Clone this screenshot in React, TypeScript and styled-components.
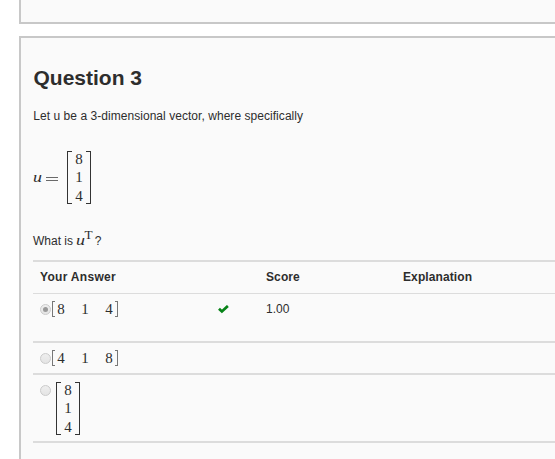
import React from "react";
import styled, { createGlobalStyle } from "styled-components";

const GlobalStyle = createGlobalStyle`
  * { box-sizing: border-box; }
  body {
    margin: 0;
    background: #fff;
    color: #2d2d2d;
    font-family: "Liberation Sans", Arial, sans-serif;
    font-size: 12px;
    overflow: hidden;
  }
`;

const Page = styled.main`
  height: 459px;
  padding-left: 19px;
  overflow: hidden;
`;

const PreviousQuestion = styled.section`
  height: 24px;
  margin-bottom: 12px;
  background: #fafafa;
  border-left: 2px solid #c8c8c8;
  border-bottom: 2px solid #c8c8c8;
`;

const QuestionPanel = styled.section`
  height: 440px;
  padding: 28px 0 0 12px;
  background: #fafafa;
  border-left: 2px solid #c8c8c8;
  border-top: 2px solid #c8c8c8;
`;

const Title = styled.h2`
  margin: 0;
  height: 40px;
  padding-left: 0.5px;
  font-size: 21px;
  line-height: 24px;
  white-space: nowrap;
`;

const Prompt = styled.p`
  margin: 0;
  height: 45px;
  padding-left: 0.3px;
  line-height: 20px;
  letter-spacing: 0.045px;
  white-space: nowrap;
`;

const Equation = styled.div`
  display: flex;
  align-items: center;
  height: 53px;
`;

const Variable = styled.span`
  width: 9px;
  font-family: "Liberation Serif", serif;
  font-style: italic;
  font-size: 14px;
  line-height: 16px;
  transform: scaleX(1.28);
  transform-origin: left;
`;

const Equals = styled.svg`
  width: 12px;
  height: 6px;
  margin: 2px 9px 0 4px;
`;

const Ask = styled.p`
  display: flex;
  align-items: baseline;
  margin: 27px 0 0;
  height: 29px;
  line-height: 20px;
  white-space: pre;
`;

const Transpose = styled.sup`
  width: 9px;
  margin-right: 0.5px;
  font-family: "Liberation Serif", serif;
  font-size: 12px;
  line-height: 1px;
  vertical-align: baseline;
  transform: translateY(-6px) scaleX(1.1);
`;

const MatrixBox = styled.span<{ $column: boolean }>`
  display: inline-flex;
  align-items: center;
  justify-content: space-between;
  flex-shrink: 0;
  width: ${(p) => (p.$column ? 24 : 66)}px;
  height: ${(p) => (p.$column ? 53 : 16)}px;
`;

const Bracket = styled.span<{ $side: "left" | "right"; $tall: boolean }>`
  width: ${(p) => (p.$tall ? 5 : 3)}px;
  height: 100%;
  border: 1px solid ${(p) => (p.$tall ? "#333" : "#777")};
  border-${(p) => (p.$side === "left" ? "right" : "left")}: 0;
`;

const Entries = styled.span<{ $column: boolean }>`
  display: flex;
  flex-direction: ${(p) => (p.$column ? "column" : "row")};
  gap: ${(p) => (p.$column ? 0 : 16)}px;
  font-family: "Liberation Serif", serif;
  font-size: 15px;
  line-height: ${(p) => (p.$column ? 18.5 : 16)}px;
  text-align: center;
  span { width: 8px; }
`;

const Answers = styled.div`
  border-top: 2px solid #dcdcdc;
`;

const Row = styled.div<{ $height: number; $line?: number }>`
  display: grid;
  grid-template-columns: 178px 48px 137px 1fr;
  height: ${(p) => p.$height}px;
  padding-left: 7px;
  border-bottom: ${(p) => p.$line ?? 2}px solid #dcdcdc;
`;

const Heading = styled.span`
  padding-top: 5px;
  font-size: 12px;
  font-weight: bold;
  line-height: 20px;
  letter-spacing: 0.1px;
  white-space: nowrap;

  &:first-child { letter-spacing: 0.3px; }
`;

const Cell = styled.div`
  display: flex;
  align-items: flex-start;
  padding-top: 7px;
  line-height: 16px;
`;

const Radio = styled.span`
  display: grid;
  place-items: center;
  flex-shrink: 0;
  width: 11px;
  height: 11px;
  margin-top: 3px;
  border: 1px solid #cbcbcb;
  border-radius: 50%;
  background: linear-gradient(#eeeeee, #e4e4e4);
`;

const Dot = styled.span`
  width: 5px;
  height: 5px;
  border-radius: 50%;
  background: #999;
`;

const Check = styled.svg`
  width: 11px;
  height: 9px;
  margin-top: 4px;
`;

function Matrix({ values, column = false }: { values: number[]; column?: boolean }) {
  return (
    <MatrixBox $column={column}>
      <Bracket $side="left" $tall={column} />
      <Entries $column={column}>
        {values.map((v) => (
          <span key={v}>{v}</span>
        ))}
      </Entries>
      <Bracket $side="right" $tall={column} />
    </MatrixBox>
  );
}

const Choice = styled.span<{ $indent: number }>`
  display: flex;
  margin-left: ${(p) => p.$indent}px;
`;

export default function App() {
  return (
    <Page>
      <GlobalStyle />
      <PreviousQuestion />
      <QuestionPanel>
        <Title>Question 3</Title>
        <Prompt>Let u be a 3-dimensional vector, where specifically</Prompt>
        <Equation>
          <Variable>u</Variable>
          <Equals viewBox="0 0 12 6">
            <path d="M0 1.5h12M0 4.5h12" stroke="#444" strokeWidth="0.8" />
          </Equals>
          <Matrix column values={[8, 1, 4]} />
        </Equation>
        <Ask>
          What is <Variable>u</Variable>
          <Transpose>T</Transpose>?
        </Ask>
        <Answers>
          <Row $height={32} $line={1}>
            <Heading>Your Answer</Heading>
            <Heading />
            <Heading>Score</Heading>
            <Heading>Explanation</Heading>
          </Row>
          <Row $height={49}>
            <Cell>
              <Radio><Dot /></Radio>
              <Choice $indent={1}><Matrix values={[8, 1, 4]} /></Choice>
            </Cell>
            <Cell>
              <Check viewBox="0 0 11 9">
                <path d="M1 3.7 3.9 6.5 9.9 0.9" fill="none" stroke="#078318" strokeWidth="2.7" />
              </Check>
            </Cell>
            <Cell>1.00</Cell>
            <Cell />
          </Row>
          <Row $height={32}>
            <Cell>
              <Radio />
              <Choice $indent={1}><Matrix values={[4, 1, 8]} /></Choice>
            </Cell>
          </Row>
          <Row $height={68}>
            <Cell>
              <Radio />
              <Choice $indent={5}><Matrix column values={[8, 1, 4]} /></Choice>
            </Cell>
          </Row>
        </Answers>
      </QuestionPanel>
    </Page>
  );
}
